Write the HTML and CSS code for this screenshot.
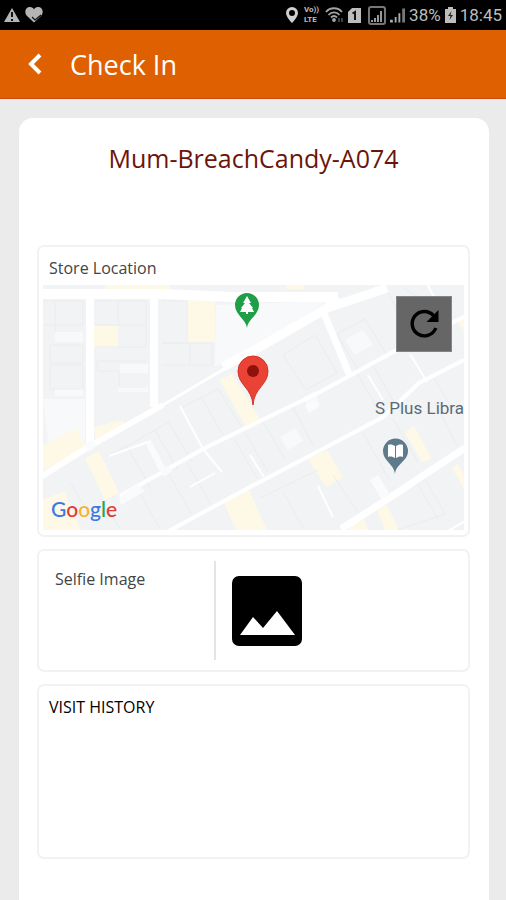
FILE: index.html
```html
<!DOCTYPE html>
<html lang="en">
<head>
  <meta charset="UTF-8">
  <meta name="viewport" content="width=device-width, initial-scale=1.0">
  <title>Check In</title>
  <link rel="stylesheet" href="styles.css">
</head>
<body>
  <div class="status-bar">
    <div class="status-group">
      <svg width="16" height="15" viewBox="0 0 16 15">
        <path d="M8 0l8 14H0z" fill="#b5b5b5"/>
        <path d="M8 4v5M8 11v2" stroke="#111" stroke-width="2"/>
      </svg>
      <svg width="18" height="16" viewBox="0 0 18 16">
        <path d="M9 15.500L2 9C-1 6 0 0 5 0c2 0 3.500 1 4 2.500C9.500 1 11 0 13 0c5 0 6 6 3 9z" fill="#b5b5b5"/>
        <path d="M7 10l3 3 6-5" fill="none" stroke="#111" stroke-width="1.200"/>
      </svg>
    </div>
    <div class="status-group status-right">
      <svg width="12" height="16" viewBox="0 0 12 16">
        <path fill-rule="evenodd" d="M6 0a6 6 0 0 1 6 6c0 4-6 10-6 10S0 10 0 6a6 6 0 0 1 6-6zm0 3a3 3 0 1 0 0 6 3 3 0 0 0 0-6z" fill="#d0d0d0"/>
      </svg>
      <span class="volte"><span>Vo))</span><span>LTE</span></span>
      <svg width="19" height="16" viewBox="0 0 19 16" fill="none" stroke="#a5a5a5" stroke-width="1.800">
        <path d="M1 5c4-5 12-5 16 0M3.500 8c3-3.500 8-3.500 11 0M6 10.500c2-2 4-2 6 0"/>
        <circle cx="9" cy="13" r="1" fill="#b5b5b5"/>
        <path d="M14 11v4M17 15v-4" stroke="#555" stroke-width="1.500"/>
      </svg>
      <svg width="13" height="15" viewBox="0 0 13 15">
        <path d="M4 0h9v15H0V4z" fill="#bdbdbd"/>
        <path d="M4.500 5.500L7 4v8" fill="none" stroke="#111" stroke-width="2"/>
      </svg>
      <svg class="sim" width="18" height="19" viewBox="0 0 18 19">
        <rect x="1" y="1" width="16" height="17" rx="2" fill="none" stroke="#777" stroke-width="2"/>
        <path d="M3 16v-2h2v2zM6 16v-4h2v4zM9 16V9h2v7zM12 16V5h2v11z" fill="#999"/>
      </svg>
      <svg width="15" height="15" viewBox="0 0 16 15">
        <path d="M0 15v-3h3v3zM5 15V9h2v6zM9 15V5h2v10z" fill="#aaa"/>
        <path d="M13 15V0h3v15z" fill="#777"/>
      </svg>
      <span class="percent">38%</span>
      <svg width="11" height="16" viewBox="0 0 11 16">
        <path d="M3 0h5v2h3v14H0V2h3z" fill="#bdbdbd"/>
        <path d="M6.500 4L3 9h2.500L4.500 13 8 8H5.500z" fill="#222"/>
      </svg>
      <span>18:45</span>
    </div>
  </div>

  <header class="app-bar">
    <button type="button" class="back" aria-label="Back">
      <svg width="16" height="24" viewBox="0 0 16 24">
        <path d="M13 3L4 12l9 9" fill="none" stroke="#fff" stroke-width="4"/>
      </svg>
    </button>
    <h1>Check In</h1>
  </header>

  <main class="card">
    <h2>Mum-BreachCandy-A074</h2>

    <section class="panel location">
      <h3>Store Location</h3>
      <div class="map">
        <svg class="map-art" viewBox="0 0 421 245" preserveAspectRatio="xMidYMid slice">
          <rect width="421" height="245" fill="#f1f3f4"/>
          <!-- open ground -->
          <path fill="#f8f9fb" d="M173 20L285 16 217 58 172 82zM0 114h42v46L8 178zM12 47h28v10H12zM77 79h28v9H77zM75 101h30v6H75zM12 104h28v7H12zM237 152l15-9 8 13-15 9zM260 113l12-7 5 14-10 4zM302 54l18-9 10 15-18 10z"/>
          <!-- gardens and shops -->
          <g fill="#fef9e6">
            <path d="M62 0h65v4H62zM243 0h18v4h-18zM51 41h24v22H51zM144 15h28v42h-28z"/>
            <path d="M0 160l34-17 8 19-42 24zM51 142l29-7 3 6-30 18zM42 173l14-7 20 42-14 7zM176 95l13-6 28 45-14 8zM0 214l22-8 4 12 12 27H0zM181 218l25-13 18 40h-31zM265 174l19-9 16 27-17 10zM362 148l9-7 18 33-10 3zM334 225l10-5 12 25h-14zM310 237l11-3 4 11h-20zM409 183l6-4 6 11v14zM415 37l6-3v12z"/>
          </g>
          <!-- building outlines -->
          <g fill="none" stroke="#eaedef" stroke-width="1">
            <path d="M0 16h40v24H0M12 16v30M52 16h51v46H52M75 16v24M52 40h51M103 76H54v10h22v16h27M119 16h25v42h-25M119 80h50V58h-50M147 58v22M7 60h33v18H7zM7 80h33v24H7z"/>
            <path d="M64 171l20-10 24 43M84 161l28-16 23 40M108 147l18-10 23 40M140 122l35-18 23 37M158 112l22 38M26 196l24 38M60 219l18 26M95 204l22 40M125 188l24 41M144 178l24 41M191 154l23 39M202 148l23 39"/>
            <path d="M240 70l32-20 22 38-31 17zM294 49l28-15 22 36-29 15zM220 137l22 37M250 122l20 38M314 88l23 40M330 80l22 39M240 207l20 36M217 213l58-28M290 190l27 40M320 148l26 46M350 134l25 43M392 118l22 42M328 226l54-32 20 35-48 16M374 198l22 38M345 8l20 36M360 3l45 25M392 94l20 35"/>
          </g>
          <!-- streets -->
          <g fill="none" stroke="#fff">
            <path stroke-width="10" d="M0 9h120l70 3h105"/>
            <path stroke-width="8" d="M47 12v149M111 12v110"/>
            <path stroke-width="6" d="M-4 193L47 161l73-41"/>
            <path stroke-width="3" d="M120 120l97-57"/>
            <path stroke-width="9" d="M180 82l37-20 67-39 60-20M284 23l12-10"/>
            <path stroke-width="7" d="M280 26l26 63"/>
            <path stroke-width="4" d="M77 211l83-47 57-28 60-29 73-40 75-37M124 247l83-45 67-35 66-35 36-34 45-23"/>
            <path stroke-width="7" d="M298 244l56-36 68-45"/>
            <path stroke-width="2" d="M137 121l23 43 19 23M147 202l25-14M367 69l17 28M384-1l12 22M66 171l42-15M405 246l17-10M207 170l14 22M275 201l15 31M325 90l15 25"/>
          </g>
          <path fill="#fafbfc" d="M76 212l18-12 8 6-24 14zM103 159l5-3 14 26-6 3zM117 184l8-3 4 5-8 6zM262 120l10-5 4 7-10 6zM41 160l7-5 6 5-8 7zM327 195l8-5 12 20-8 5z"/>

          <!-- park pin -->
          <path fill="#1e9f47" d="M204 43c-1-9-12-13-12-23a12 12 0 0 1 24 0c0 10-11 14-12 23z"/>
          <path fill="#fff" d="M204 11l-4 7h2l-4 5h1l-2 4h6v2h2v-2h6l-2-4h1l-4-5h2z"/>
          <!-- store marker -->
          <path fill="#ea4335" stroke="#d33426" stroke-width="1" d="M210 120c-1-17-15-20-15-34a15 15 0 0 1 30 0c0 14-14 17-15 34z"/>
          <circle cx="210" cy="86" r="6" fill="#8c120b"/>
          <!-- library pin -->
          <path fill="#5e7b8b" d="M352 189c-1-10-12-13-12-23a12 12 0 0 1 25 0c0 10-12 13-13 23z"/>
          <path fill="#fff" d="M345 160c3-1 5 0 7 1v12c-2-1-4-2-7-1zM353 161c2-1 4-2 7-1v12c-3-1-5 0-7 1z"/>
        </svg>
        <span class="place">S Plus Libra</span>
        <span class="google"><span class="blue">G</span><span class="red">o</span><span class="yellow">o</span><span class="blue">g</span><span class="green">l</span><span class="red">e</span></span>
        <button type="button" class="refresh" aria-label="Refresh location">
          <svg width="30" height="30" viewBox="0 0 30 30">
            <path d="M24.500 6.500A12.200 12.200 0 1 0 26.800 19" fill="none" stroke="#000" stroke-width="3.400"/>
            <path d="M29.500 1v12h-12z"/>
          </svg>
        </button>
      </div>
    </section>

    <section class="panel selfie">
      <h3>Selfie Image</h3>
      <button type="button" class="photo" aria-label="Add selfie image">
        <svg width="70" height="70" viewBox="0 0 70 70">
          <rect width="70" height="70" rx="7"/>
          <path d="M8 59l13-18 10 11 14-17 18 24z" fill="#fff"/>
        </svg>
      </button>
    </section>

    <section class="panel history">
      <h3>VISIT HISTORY</h3>
    </section>
  </main>
</body>
</html>
```
FILE: styles.css
```css
* {
  box-sizing: border-box;
}
body {
  margin: 0;
  min-height: 100vh;
  display: flex;
  flex-direction: column;
  font-family: "Open Sans", sans-serif;
  background-color: #ebebeb;
}
h1, h2, h3 {
  margin: 0;
  font-weight: 400;
}
button {
  padding: 0;
  border: none;
  background: none;
  cursor: pointer;
}
svg {
  display: block;
}
.status-bar {
  display: flex;
  justify-content: space-between;
  align-items: center;
  height: 30px;
  padding: 0 4px;
  background-color: #000;
  color: #bdbdbd;
  font-family: Roboto, sans-serif;
  font-size: 17px;
}
.status-group {
  display: flex;
  align-items: center;
  gap: 5px;
}
.status-right {
  gap: 4px;
}
.volte {
  display: flex;
  flex-direction: column;
  margin: 0 2px;
  font-size: 8px;
  font-weight: 700;
  line-height: 10px;
}
.sim {
  margin-left: 3px;
}
.app-bar {
  display: flex;
  align-items: center;
  gap: 27px;
  height: 69px;
  padding: 0 27px;
  background-color: #df6000;
  border-bottom: 1px solid #d04a10;
  color: #fff;
}
.app-bar h1 {
  font-size: 27px;
  font-weight: 500;
}
.card {
  flex: 1;
  margin: 19px 17px 0 19px;
  padding: 22px 19px 40px 18px;
  background-color: #fff;
  border-radius: 14px 14px 0 0;
}
.card h2 {
  margin-bottom: 69px;
  color: #6b1509;
  font-size: 25px;
  line-height: 36px;
  text-align: center;
}
.panel {
  margin-bottom: 12px;
  border: 2px solid #f2f2f2;
  border-radius: 7px;
}
.panel h3 {
  color: #444;
  font-size: 16px;
  line-height: 22px;
}
.location {
  padding: 10px 4px 5px;
}
.location h3 {
  margin-bottom: 6px;
  padding-left: 6px;
}
.map {
  position: relative;
  height: 245px;
  overflow: hidden;
}
.map-art {
  width: 100%;
  height: 100%;
}
.place {
  position: absolute;
  top: 113px;
  right: 0;
  color: #5b6b75;
  font-family: Roboto, sans-serif;
  font-size: 17px;
  line-height: 20px;
}
.google {
  position: absolute;
  left: 8px;
  bottom: 8px;
  font-family: Lato, sans-serif;
  font-size: 21px;
  font-weight: 500;
  line-height: 26px;
}
.blue {
  color: #3b78e7;
}
.red {
  color: #e33b2e;
}
.yellow {
  color: #f4b52a;
}
.green {
  color: #2ba24c;
}
.refresh {
  position: absolute;
  top: 11px;
  right: 12px;
  display: flex;
  justify-content: center;
  align-items: center;
  width: 56px;
  height: 56px;
  background-color: #666;
  border: 1px solid #858585;
}
.selfie {
  display: grid;
  grid-template-columns: 2fr 3fr;
  min-height: 123px;
  padding: 10px 16px;
}
.selfie h3 {
  padding-top: 7px;
}
.photo {
  display: flex;
  align-items: center;
  padding-left: 16px;
  border-left: 2px solid #e4e4e4;
}
.history {
  min-height: 175px;
  padding: 10px;
}
.history h3 {
  color: #000;
}
```
